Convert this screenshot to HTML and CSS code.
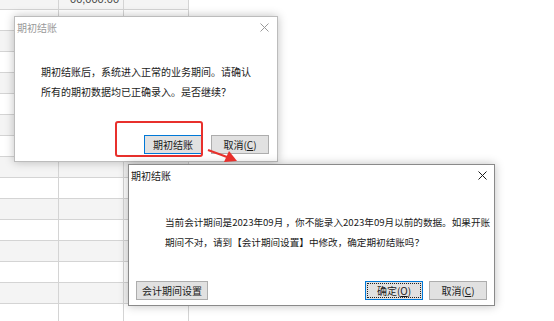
FILE: index.html
```html
<!DOCTYPE html>
<html lang="zh-CN">
<head>
<meta charset="utf-8">
<title>期初结账</title>
<link rel="stylesheet" href="styles.css">
</head>
<body>
<div class="desk">
  <div class="sheet">
    <div class="row g"><div class="c"></div><div class="c num">00,000.00</div><div class="c"></div></div>
    <div class="row"><div class="c"></div><div class="c"></div><div class="c"></div></div>
    <div class="row g"><div class="c"></div><div class="c"></div><div class="c"></div></div>
    <div class="row"><div class="c"></div><div class="c"></div><div class="c"></div></div>
    <div class="row g"><div class="c"></div><div class="c"></div><div class="c"></div></div>
    <div class="row"><div class="c"></div><div class="c"></div><div class="c"></div></div>
    <div class="row g"><div class="c"></div><div class="c"></div><div class="c"></div></div>
    <div class="row"><div class="c"></div><div class="c"></div><div class="c"></div></div>
    <div class="row g"><div class="c"></div><div class="c"></div><div class="c"></div></div>
    <div class="row"><div class="c"></div><div class="c"></div><div class="c"></div></div>
    <div class="row g"><div class="c"></div><div class="c"></div><div class="c"></div></div>
    <div class="row"><div class="c"></div><div class="c"></div><div class="c"></div></div>
    <div class="row g"><div class="c"></div><div class="c"></div><div class="c"></div></div>
    <div class="row"><div class="c"></div><div class="c"></div><div class="c"></div></div>
    <div class="row g"><div class="c"></div><div class="c"></div><div class="c"></div></div>
    <div class="row"><div class="c"></div><div class="c"></div><div class="c"></div></div>
  </div>

  <div class="dlg dlg1">
    <div class="tbar inactive">
      <span class="ttl">期初结账</span>
      <svg class="x" width="9" height="9" viewBox="0 0 9 9"><path d="M0.5 0.5L8.5 8.5M8.5 0.5L0.5 8.5" stroke="currentColor" stroke-width="1" fill="none"/></svg>
    </div>
    <div class="body1">
      <p class="msg">期初结账后，系统进入正常的业务期间。请确认</p>
      <p class="msg">所有的期初数据均已正确录入。是否继续？</p>
    </div>
    <div class="btns btns1">
      <button class="btn def">期初结账</button>
      <button class="btn">取消(<u>C</u>)</button>
    </div>
  </div>

  <div class="mark"></div>

  <div class="dlg dlg2">
    <div class="tbar">
      <span class="ttl">期初结账</span>
      <svg class="x" width="9" height="9" viewBox="0 0 9 9"><path d="M0.5 0.5L8.5 8.5M8.5 0.5L0.5 8.5" stroke="currentColor" stroke-width="1" fill="none"/></svg>
    </div>
    <div class="body2">
      <p class="msg">当前会计期间是2023年09月 ，你不能录入2023年09月以前的数据。如果开账</p>
      <p class="msg">期间不对，请到【会计期间设置】中修改，确定期初结账吗？</p>
    </div>
    <div class="btns btns2">
      <button class="btn wide">会计期间设置</button>
      <span class="spacer"></span>
      <button class="btn def focus">确定(<u>O</u>)</button>
      <button class="btn">取消(<u>C</u>)</button>
    </div>
  </div>

  <svg class="arrow" width="554" height="321" viewBox="0 0 554 321">
    <path d="M208 150L227 157" stroke="#e8302c" stroke-width="2" fill="none"/>
    <path d="M237 161L224 162L229 151Z" fill="#e8302c"/>
  </svg>
</div>
</body>
</html>
```

FILE: styles.css
```css
html, body {
  margin: 0;
  padding: 0;
  background: #ffffff;
}

body {
  width: 554px;
  height: 321px;
  overflow: hidden;
  font-family: "Noto Sans CJK SC", "Noto Sans", sans-serif;
  color: #1a1a1a;
}

.desk {
  position: relative;
  width: 554px;
  height: 321px;
  overflow: hidden;
}

/* spreadsheet in the background */
.sheet {
  width: 189px;
  margin-top: -11px;
  display: flex;
  flex-direction: column;
}

.row {
  display: grid;
  grid-template-columns: 59px 65px 65px;
  height: 21px;
  box-sizing: border-box;
  border-bottom: 1px solid #d4d4d4;
}

.row.g {
  background: #f4f4f4;
}

.c {
  border-right: 1px solid #d4d4d4;
}

.num {
  font-family: "Liberation Sans", sans-serif;
  font-size: 11px;
  line-height: 20px;
  color: #444;
  text-align: right;
  padding-right: 4px;
}

/* dialogs */
.dlg {
  position: absolute;
  box-sizing: border-box;
  background: #ffffff;
  display: flex;
  flex-direction: column;
  box-shadow: 0 0 9px rgba(0, 0, 0, 0.25);
}

.dlg1 {
  left: 14px;
  top: 16px;
  width: 264px;
  height: 146px;
  border: 1px solid #bcbcbc;
}

.dlg2 {
  left: 128px;
  top: 164px;
  width: 367px;
  height: 142px;
  border: 1px solid #8a8a8a;
}

.tbar {
  height: 20px;
  display: flex;
  align-items: center;
  justify-content: space-between;
  padding: 0 8px 0 2px;
  font-size: 10px;
  color: #1a1a1a;
}

.tbar.inactive {
  color: #9a9a9a;
}

.dlg2 .tbar {
  padding-right: 7px;
}

.x {
  display: block;
}

.msg {
  margin: 0;
  line-height: 20px;
  white-space: nowrap;
}

.body1 {
  flex: 1;
  padding: 25px 0 0 26px;
  font-size: 10px;
}

.body2 {
  flex: 1;
  padding: 27px 0 0 36px;
  font-size: 9.6px;
}

.btns {
  display: flex;
  align-items: center;
}

.btns1 {
  justify-content: flex-end;
  gap: 9px;
  padding: 0 8px 7px 0;
}

.btns2 {
  gap: 6px;
  padding: 0 7px 5px 7px;
}

.spacer {
  flex: 1;
}

.btn {
  width: 58px;
  height: 19px;
  box-sizing: border-box;
  margin: 0;
  padding: 0;
  background: #e1e1e1;
  border: 1px solid #adadad;
  border-radius: 0;
  font-family: "Noto Sans CJK SC", "Noto Sans", sans-serif;
  font-size: 10px;
  line-height: 17px;
  color: #1a1a1a;
  text-align: center;
}

.btn.wide {
  width: 72px;
}

.btn.def {
  border-color: #0078d7;
}

.btn.focus {
  outline: 1px dotted #222;
  outline-offset: -3px;
}

/* red annotation */
.mark {
  position: absolute;
  left: 115px;
  top: 121px;
  width: 88px;
  height: 36px;
  box-sizing: border-box;
  border: 2px solid #e8302c;
  border-radius: 3px;
}

.arrow {
  position: absolute;
  left: 0;
  top: 0;
}
```
